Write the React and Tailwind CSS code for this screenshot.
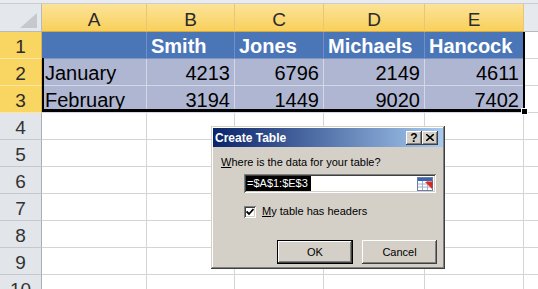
import React from "react";

const cols = [
  { key: "A", w: "w-[105px]" },
  { key: "B", w: "w-[88px]" },
  { key: "C", w: "w-[89px]" },
  { key: "D", w: "w-[101px]" },
  { key: "E", w: "w-[99px]" },
];

const data = [
  ["January", 4213, 6796, 2149, 4611],
  ["February", 3194, 1449, 9020, 7402],
];

const headers = ["", "Smith", "Jones", "Michaels", "Hancock"];

const font = { fontFamily: '"Liberation Sans", Arial, sans-serif' };

function RowHeader({ n, selected }) {
  return (
    <div
      className={
        "w-[42px] shrink-0 h-full border-r border-b text-center text-[19px] leading-[21px] pt-[4px] " +
        (selected
          ? "bg-[#f9d561] border-r-[#e1b24a] border-b-[#fbe6a6] text-[#2b2b2b]"
          : "bg-[#e2e5ea] border-r-[#a9afb8] border-b-[#c4c9d0] text-[#333]")
      }
    >
      {n}
    </div>
  );
}

function Win2kButton({ children, className = "" }) {
  return (
    <div
      className={
        "bg-[#d4d0c8] flex items-center justify-center shadow-[inset_-1px_-1px_#404040,inset_1px_1px_#ffffff,inset_-2px_-2px_#808080] " +
        className
      }
    >
      {children}
    </div>
  );
}

function RangeIcon() {
  return (
    <svg width="17" height="16" viewBox="0 0 17 16">
      <rect x="0.5" y="1.5" width="15" height="13" fill="#ffffff" stroke="#6a7fa8" />
      <rect x="1" y="2" width="14" height="3" fill="#3b64b0" />
      <line x1="1" y1="8" x2="15" y2="8" stroke="#9fb0cf" />
      <line x1="1" y1="11" x2="15" y2="11" stroke="#9fb0cf" />
      <line x1="5.5" y1="5" x2="5.5" y2="14" stroke="#9fb0cf" />
      <line x1="10.5" y1="5" x2="10.5" y2="14" stroke="#9fb0cf" />
      <polygon points="8,6 15,6 15,13" fill="#e0322b" />
      <polygon points="9,5 16,5 16,12" fill="#c42018" opacity="0.5" />
    </svg>
  );
}

export default function App() {
  return (
    <div className="relative w-[538px] h-[289px] overflow-hidden bg-white" style={font}>
      {/* top strip */}
      <div className="h-[4px] bg-[#e9ebee] border-b border-b-[#c9cdd3]" />

      {/* column header row */}
      <div className="flex h-[28px]">
        <div className="w-[42px] shrink-0 h-full bg-[#e4e7eb] border-r border-b border-r-[#b5bac1] border-b-[#b5bac1] flex items-end justify-end pr-[4px] pb-[3px]">
          <svg width="17" height="15" viewBox="0 0 17 15">
            <polygon points="17,0 17,15 0,15" fill="#c5c9ce" />
          </svg>
        </div>
        {cols.map((c) => (
          <div
            key={c.key}
            className={
              c.w +
              " shrink-0 h-full bg-[linear-gradient(to_bottom,#fce39a,#f8d05a)] border-r border-b border-r-[#e8c577] border-b-[#d9a93e] text-center text-[19px] leading-[21px] pt-[5px] text-[#2b2b2b]"
            }
          >
            {c.key}
          </div>
        ))}
        <div className="flex-1 h-full bg-[#e6e9ed] border-b border-b-[#b5bac1]" />
      </div>

      {/* row 1: table headers */}
      <div className="flex h-[27px]">
        <RowHeader n={1} selected />
        {cols.map((c, i) => (
          <div
            key={c.key}
            className={
              c.w +
              " shrink-0 h-full bg-[#4a76b8] border-r border-b border-r-[#6f8fc6] border-b-[#7e95c6] text-white font-bold text-[20px] leading-[22px] pt-[3px] pl-[4px] whitespace-nowrap"
            }
          >
            {headers[i]}
          </div>
        ))}
        <div className="flex-1 h-full border-b border-b-[#d4d4d4]" />
      </div>

      {/* data rows */}
      {data.map((row, r) => (
        <div key={r} className="flex h-[27px]">
          <RowHeader n={r + 2} selected />
          {cols.map((c, i) => (
            <div
              key={c.key}
              className={
                c.w +
                " shrink-0 h-full bg-[#afb6d2] border-r border-b border-r-[#d3d7e6] border-b-[#d3d7e6] text-black text-[20px] leading-[22px] pt-[3px] whitespace-nowrap " +
                (i === 0 ? "pl-[3px] text-left" : "pr-[4px] text-right")
              }
            >
              {row[i]}
            </div>
          ))}
          <div className="flex-1 h-full border-b border-b-[#d4d4d4]" />
        </div>
      ))}

      {/* empty rows */}
      {[4, 5, 6, 7, 8, 9, 10].map((n) => (
        <div key={n} className="flex h-[27px]">
          <RowHeader n={n} />
          {cols.map((c) => (
            <div key={c.key} className={c.w + " shrink-0 h-full border-r border-b border-[#d4d4d4]"} />
          ))}
          <div className="flex-1 h-full border-b border-b-[#d4d4d4]" />
        </div>
      ))}

      {/* selection border overlay */}
      <div className="absolute left-[42px] top-[58px] w-[2px] h-[54px] bg-black" />
      <div className="absolute left-[523px] top-[32px] w-[2px] h-[80px] bg-black" />
      <div className="absolute left-[42px] top-[109px] w-[483px] h-[3px] bg-black" />
      <div className="absolute left-[521px] top-[108px] w-[7px] h-[7px] bg-black border border-white" />

      {/* Create Table dialog */}
      <div className="absolute left-[211px] top-[126px] w-[234px] h-[143px] bg-[#d4d0c8] shadow-[inset_-1px_-1px_#404040,inset_1px_1px_#d4d0c8,inset_-2px_-2px_#808080,inset_2px_2px_#ffffff] p-[2px] flex flex-col">
        <div className="h-[19px] bg-[linear-gradient(to_right,#0a246a,#a6caf0)] flex items-center pl-[2px] pr-[5px]">
          <span className="text-white font-bold text-[12px] leading-[14px] flex-1">Create Table</span>
          <Win2kButton className="w-[16px] h-[14px]">
            <span className="text-black font-bold text-[12px] leading-[12px]">?</span>
          </Win2kButton>
          <Win2kButton className="w-[16px] h-[14px]">
            <svg width="8" height="7" viewBox="0 0 8 7">
              <path d="M0 0 L8 7 M8 0 L0 7" stroke="#000" strokeWidth="1.6" />
            </svg>
          </Win2kButton>
        </div>

        <div className="flex flex-col text-[11px] leading-[13px] text-black">
          <div className="pl-[8px] pt-[9px]">
            <u className="underline-offset-[1px]">W</u>here is the data for your table?
          </div>
          <div className="ml-[31px] mt-[5px] w-[192px] h-[19px] bg-white shadow-[inset_1px_1px_#808080,inset_-1px_-1px_#ffffff,inset_2px_2px_#404040,inset_-2px_-2px_#d4d0c8] flex items-center pl-[2px] pr-[2px]">
            <span className="bg-black text-white h-[15px] leading-[15px] text-[11px] pl-[1px] w-[65px] whitespace-nowrap">=$A$1:$E$3</span>
            <div className="flex-1" />
            <RangeIcon />
          </div>
          <div className="ml-[31px] mt-[12px] flex items-center gap-[6px]">
            <div className="w-[12px] h-[12px] bg-white shadow-[inset_1px_1px_#808080,inset_-1px_-1px_#ffffff,inset_2px_2px_#404040,inset_-2px_-2px_#d4d0c8] flex items-center justify-center">
              <svg width="8" height="8" viewBox="0 0 8 8">
                <path d="M0.5 3.5 L3 6 L7.5 1" stroke="#000" strokeWidth="1.8" fill="none" />
              </svg>
            </div>
            <span>
              <u className="underline-offset-[1px]">M</u>y table has headers
            </span>
          </div>
          <div className="flex mt-[22px] ml-[64px] gap-[9px]">
            <div className="w-[76px] h-[24px] bg-[#d4d0c8] shadow-[inset_0_0_0_1px_#000000,inset_-2px_-2px_#404040,inset_2px_2px_#ffffff,inset_-3px_-3px_#808080] flex items-center justify-center">
              OK
            </div>
            <Win2kButton className="w-[75px] h-[24px]">Cancel</Win2kButton>
          </div>
        </div>
      </div>
    </div>
  );
}
